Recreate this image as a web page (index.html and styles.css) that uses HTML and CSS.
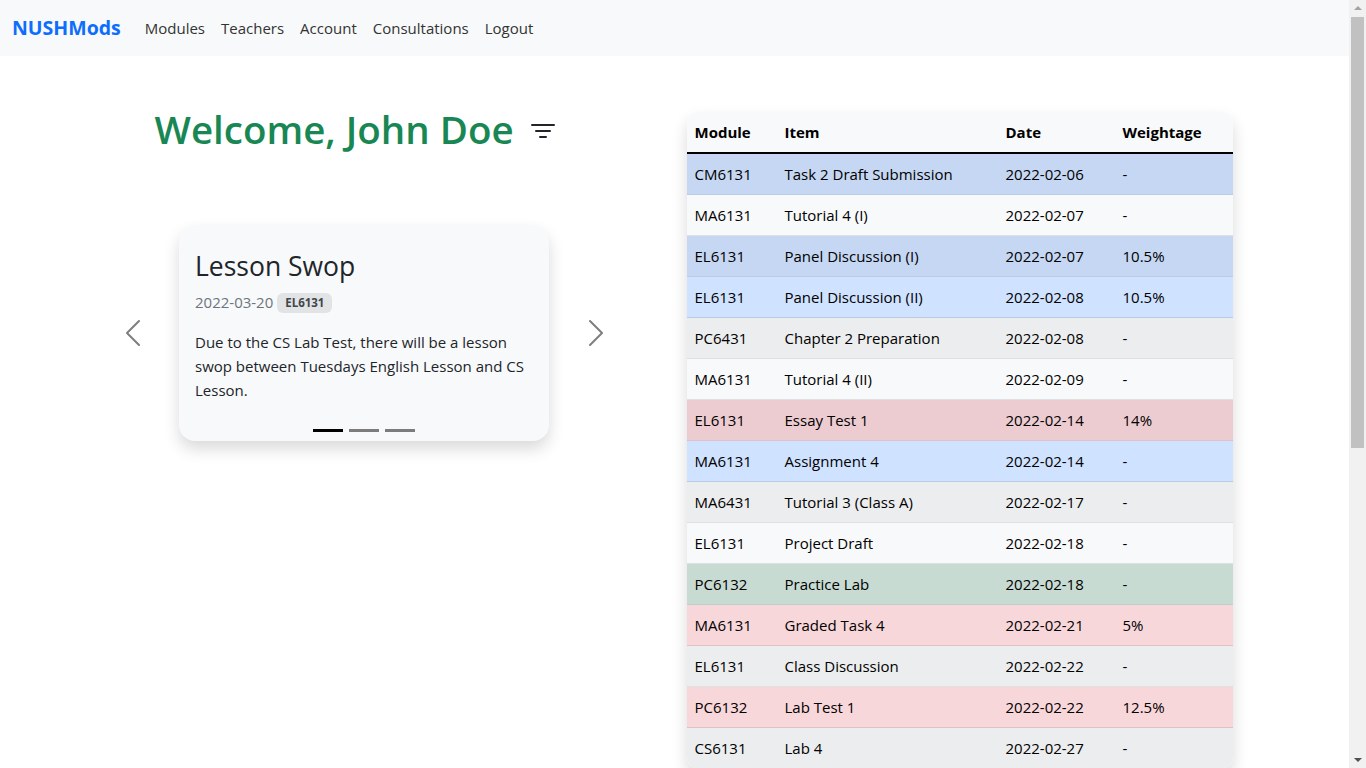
FILE: index.html
```html
<!DOCTYPE html>
<html lang="en">
<head>
<meta charset="utf-8">
<title>NUSHMods</title>
<link rel="stylesheet" href="styles.css">
</head>
<body>
<nav class="navbar">
  <a class="brand" href="#">NUSHMods</a>
  <ul class="nav">
    <li><a href="#">Modules</a></li>
    <li><a href="#">Teachers</a></li>
    <li><a href="#">Account</a></li>
    <li><a href="#">Consultations</a></li>
    <li><a href="#">Logout</a></li>
  </ul>
</nav>

<main class="container">
  <section class="left">
    <div class="welcome">
      <h1>Welcome, John Doe</h1>
      <button class="filter-btn" aria-label="Filter">
        <svg viewBox="0 0 16 16" width="32" height="32" fill="#212529"><path d="M6 10.5a.5.5 0 0 1 .5-.5h3a.5.5 0 0 1 0 1h-3a.5.5 0 0 1-.5-.5zm-2-3a.5.5 0 0 1 .5-.5h7a.5.5 0 0 1 0 1h-7a.5.5 0 0 1-.5-.5zm-2-3a.5.5 0 0 1 .5-.5h11a.5.5 0 0 1 0 1h-11a.5.5 0 0 1-.5-.5z"/></svg>
      </button>
    </div>

    <div class="carousel">
      <button class="ctrl" aria-label="Previous">
        <svg viewBox="0 0 16 16" width="32" height="32" fill="#000"><path d="M11.354 1.646a.5.5 0 0 1 0 .708L5.707 8l5.647 5.646a.5.5 0 0 1-.708.708l-6-6a.5.5 0 0 1 0-.708l6-6a.5.5 0 0 1 .708 0z"/></svg>
      </button>
      <div class="card">
        <h3 class="card-title">Lesson Swop</h3>
        <div class="card-meta"><span class="date">2022-03-20</span> <span class="badge">EL6131</span></div>
        <p class="card-text">Due to the CS Lab Test, there will be a lesson swop between Tuesdays English Lesson and CS Lesson.</p>
        <div class="indicators">
          <span class="ind active"></span><span class="ind"></span><span class="ind"></span>
        </div>
      </div>
      <button class="ctrl" aria-label="Next">
        <svg viewBox="0 0 16 16" width="32" height="32" fill="#000"><path d="M4.646 1.646a.5.5 0 0 1 .708 0l6 6a.5.5 0 0 1 0 .708l-6 6a.5.5 0 0 1-.708-.708L10.293 8 4.646 2.354a.5.5 0 0 1 0-.708z"/></svg>
      </button>
    </div>
  </section>

  <section class="right">
    <div class="table-wrap">
      <table class="tbl">
        <colgroup><col class="c1"><col class="c2"><col class="c3"><col class="c4"></colgroup>
        <thead>
          <tr><th>Module</th><th>Item</th><th>Date</th><th>Weightage</th></tr>
        </thead>
        <tbody>
          <tr class="primary"><td>CM6131</td><td>Task 2 Draft Submission</td><td>2022-02-06</td><td>-</td></tr>
          <tr class="light"><td>MA6131</td><td>Tutorial 4 (I)</td><td>2022-02-07</td><td>-</td></tr>
          <tr class="primary"><td>EL6131</td><td>Panel Discussion (I)</td><td>2022-02-07</td><td>10.5%</td></tr>
          <tr class="primary"><td>EL6131</td><td>Panel Discussion (II)</td><td>2022-02-08</td><td>10.5%</td></tr>
          <tr class="light"><td>PC6431</td><td>Chapter 2 Preparation</td><td>2022-02-08</td><td>-</td></tr>
          <tr class="light"><td>MA6131</td><td>Tutorial 4 (II)</td><td>2022-02-09</td><td>-</td></tr>
          <tr class="danger"><td>EL6131</td><td>Essay Test 1</td><td>2022-02-14</td><td>14%</td></tr>
          <tr class="primary"><td>MA6131</td><td>Assignment 4</td><td>2022-02-14</td><td>-</td></tr>
          <tr class="light"><td>MA6431</td><td>Tutorial 3 (Class A)</td><td>2022-02-17</td><td>-</td></tr>
          <tr class="light"><td>EL6131</td><td>Project Draft</td><td>2022-02-18</td><td>-</td></tr>
          <tr class="success"><td>PC6132</td><td>Practice Lab</td><td>2022-02-18</td><td>-</td></tr>
          <tr class="danger"><td>MA6131</td><td>Graded Task 4</td><td>2022-02-21</td><td>5%</td></tr>
          <tr class="light"><td>EL6131</td><td>Class Discussion</td><td>2022-02-22</td><td>-</td></tr>
          <tr class="danger"><td>PC6132</td><td>Lab Test 1</td><td>2022-02-22</td><td>12.5%</td></tr>
          <tr class="light"><td>CS6131</td><td>Lab 4</td><td>2022-02-27</td><td>-</td></tr>
        </tbody>
      </table>
    </div>
  </section>
</main>

<div class="scrollbar" aria-hidden="true">
  <span class="sb-arrow up"></span>
  <span class="sb-thumb"></span>
  <span class="sb-arrow down"></span>
</div>
</body>
</html>
```

FILE: styles.css
```css
* { box-sizing: border-box; }

html { overflow: hidden; }

body {
  margin: 0;
  padding-right: 17px;
  font-family: "Open Sans", "Noto Sans", sans-serif;
  font-size: 15px;
  line-height: 24px;
  color: #212529;
  background: #fff;
}

a { text-decoration: none; }

.navbar {
  height: 56px;
  background: #f8f9fa;
  display: flex;
  align-items: center;
  padding: 0 12px;
}

.brand {
  font-size: 19.5px;
  font-weight: 700;
  color: #0d6efd;
  margin-right: 16px;
  line-height: 30px;
}

.nav {
  list-style: none;
  margin: 0;
  padding: 0;
  display: flex;
}

.nav a {
  display: block;
  padding: 8px;
  color: #333;
}

.container {
  max-width: 1140px;
  margin: 0 auto;
  padding: 49px 12px 48px;
  display: grid;
  grid-template-columns: 495px 1fr;
  column-gap: 75px;
  align-items: start;
}

.welcome {
  display: flex;
  align-items: center;
  padding-left: 38px;
}

.welcome h1 {
  margin: 0;
  font-size: 38.5px;
  font-weight: 600;
  line-height: 48px;
  color: #198754;
}

.filter-btn {
  border: 0;
  background: transparent;
  padding: 4px 8px 4px 13px;
  display: flex;
  margin-top: 6px;
}

.carousel {
  margin-top: 72px;
  display: flex;
  align-items: center;
  justify-content: space-between;
}

.ctrl {
  border: 0;
  background: transparent;
  padding: 0;
  width: 32px;
  height: 32px;
  opacity: 0.5;
  display: flex;
}

.card {
  width: 370px;
  background: #f8f9fa;
  border-radius: 16px;
  box-shadow: 0 8px 16px rgba(0, 0, 0, 0.15);
  padding: 24px 16px 9px;
}

.card-title {
  margin: 0 0 7px;
  font-size: 26.5px;
  font-weight: 500;
  line-height: 34px;
  color: #212529;
}

.card-meta {
  line-height: 24px;
}

.date { color: #6c757d; }

.badge {
  display: inline-block;
  font-size: 11.5px;
  font-weight: 700;
  line-height: 1;
  padding: 4px 8px;
  border-radius: 6px;
  background: #e2e3e5;
  color: #41464b;
  vertical-align: 1px;
}

.card-text {
  margin: 16px 0 0;
}

.indicators {
  margin-top: 27px;
  display: flex;
  justify-content: center;
  gap: 6px;
}

.ind {
  width: 30px;
  height: 3px;
  background: #000;
  opacity: 0.5;
}

.ind.active { opacity: 1; }

.table-wrap {
  margin-top: 7px;
  border-radius: 12px;
  overflow: hidden;
  box-shadow: 0 8px 16px rgba(0, 0, 0, 0.15);
}

.tbl {
  width: 100%;
  border-collapse: collapse;
  table-layout: fixed;
  color: #000;
}

.c1 { width: 90px; }
.c2 { width: 221px; }
.c3 { width: 117px; }
.c4 { width: 118px; }

.tbl th, .tbl td {
  padding: 8px;
  text-align: left;
  line-height: 24px;
  white-space: nowrap;
}

.tbl thead th {
  background: #f8f9fa;
  font-weight: 700;
  border-bottom: 2px solid #000;
}

.tbl tbody td { border-bottom: 1px solid #dfe0e1; }

.tbl tbody tr.light td { background: #f8f9fa; border-color: #dfe0e1; }
.tbl tbody tr.primary td { background: #cfe2ff; border-color: #bacbe6; }
.tbl tbody tr.danger td { background: #f8d7da; border-color: #dfc2c4; }
.tbl tbody tr.success td { background: #d1e7dd; border-color: #bcd0c7; }

.tbl tbody tr:nth-child(odd).light td { background: #ecedee; }
.tbl tbody tr:nth-child(odd).primary td { background: #c5d7f2; }
.tbl tbody tr:nth-child(odd).danger td { background: #ecccd0; }
.tbl tbody tr:nth-child(odd).success td { background: #c7dbd2; }

/* classic scrollbar drawn over the right edge */
.scrollbar {
  position: fixed;
  top: 0;
  right: 0;
  width: 17px;
  height: 100vh;
  background: #f1f1f1;
  display: flex;
  flex-direction: column;
  align-items: center;
}

.sb-arrow {
  width: 0;
  height: 0;
  border-left: 4px solid transparent;
  border-right: 4px solid transparent;
}

.sb-arrow.up {
  margin-top: 6px;
  border-bottom: 4px solid #a3a3a3;
}

.sb-thumb {
  margin-top: 7px;
  width: 13px;
  height: 431px;
  background: #c1c1c1;
}

.sb-arrow.down {
  margin-top: auto;
  margin-bottom: 6px;
  border-top: 4px solid #505050;
}
```
